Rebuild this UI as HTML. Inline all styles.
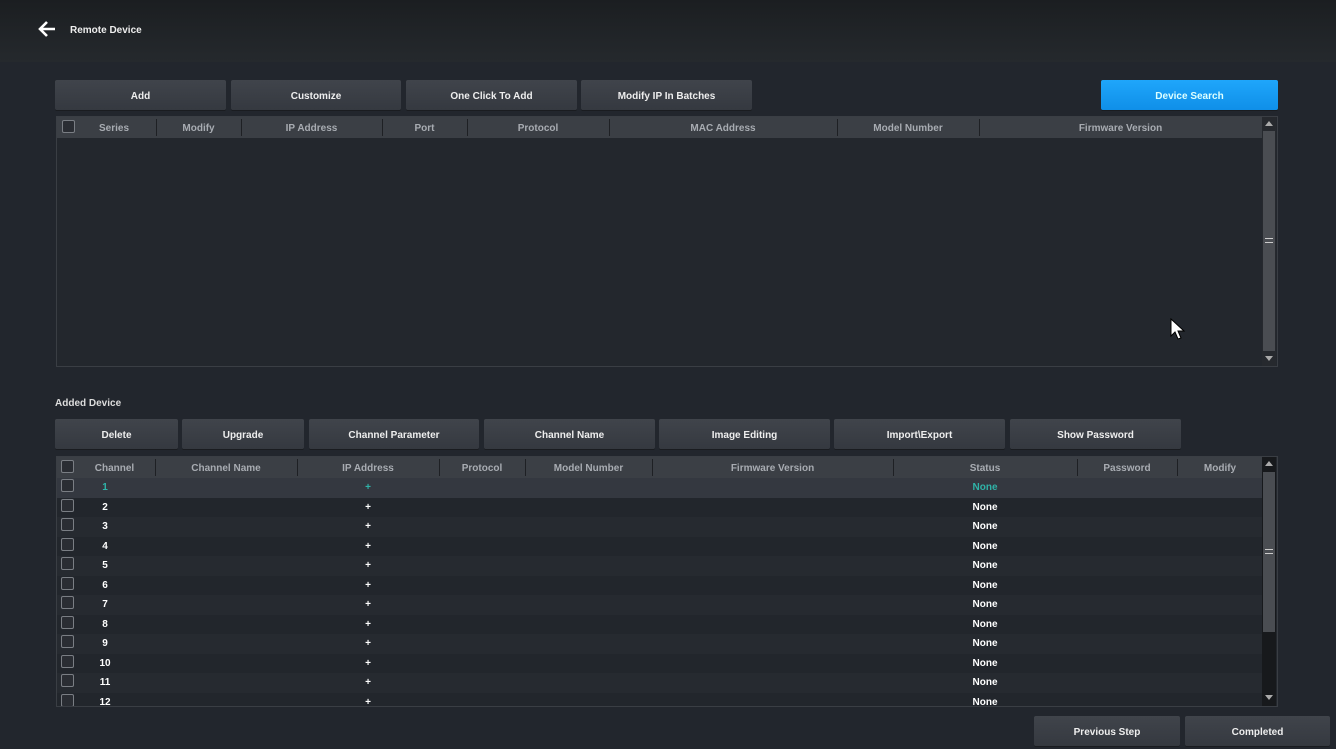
<!DOCTYPE html>
<html><head><style>
*{margin:0;padding:0;box-sizing:border-box}
body{width:1336px;height:749px;background:#22262d;font-family:"Liberation Sans",sans-serif;font-size:10px;font-weight:bold;color:#e8e8e8;position:relative;overflow:hidden}
.hdr{position:absolute;left:0;top:0;width:1336px;height:62px;background:linear-gradient(#1b1e21,#25292d)}
.a{position:absolute}
.btn{position:absolute;height:30px;background:linear-gradient(#40444b,#353940);border-radius:2px;text-align:center;line-height:33px;color:#eee;box-shadow:0 1px 0 #1a1c20}
.tbl{position:absolute;left:56px;width:1222px;background:#23272d;border:1px solid #3a3e44}
.th{position:absolute;top:0;height:21px;background:#3b3f45;color:#a8acb2;font-weight:bold;line-height:24px;text-align:center}
.sep{position:absolute;top:2px;width:1px;height:17px;background:#1e2024}
.cb{position:absolute;width:13px;height:13px;border:1px solid #7a7e84;border-radius:2px;background:#2a2d33}
.sb{position:absolute;right:1px;top:0;width:14px;background:#26292e}
.row{position:absolute;left:0;width:1206px;height:19.5px;line-height:19px}
.c{position:absolute;text-align:center}
</style></head><body>
<div class="hdr"></div>
<svg class="a" style="left:37px;top:20px" width="20" height="18" viewBox="0 0 20 18"><path d="M18 9H3M10 2L3 9l7 7" stroke="#fff" stroke-width="2.6" fill="none"/></svg>
<div class="a" style="left:70px;top:25px;color:#eee">Remote Device</div>

<div class="btn" style="left:55px;top:80px;width:171px">Add</div>
<div class="btn" style="left:231px;top:80px;width:170px">Customize</div>
<div class="btn" style="left:406px;top:80px;width:171px">One Click To Add</div>
<div class="btn" style="left:581px;top:80px;width:171px">Modify IP In Batches</div>
<div class="btn" style="left:1101px;top:80px;width:177px;background:linear-gradient(#1fa6fb,#0f8fe8);color:#dff">Device Search</div>

<div class="tbl" style="top:116px;height:251px">
 <div class="th" style="left:0;width:1206px"></div>
 <div class="cb" style="left:5px;top:3px"></div>
 <div class="th c" style="left:16px;width:82px;background:none">Series</div>
 <div class="th c" style="left:99px;width:85px;background:none">Modify</div>
 <div class="th c" style="left:184px;width:141px;background:none">IP Address</div>
 <div class="th c" style="left:325px;width:85px;background:none">Port</div>
 <div class="th c" style="left:410px;width:142px;background:none">Protocol</div>
 <div class="th c" style="left:552px;width:228px;background:none">MAC Address</div>
 <div class="th c" style="left:780px;width:142px;background:none">Model Number</div>
 <div class="th c" style="left:922px;width:283px;background:none">Firmware Version</div>
 <div class="sep" style="left:99px"></div><div class="sep" style="left:184px"></div><div class="sep" style="left:325px"></div><div class="sep" style="left:410px"></div><div class="sep" style="left:552px"></div><div class="sep" style="left:780px"></div><div class="sep" style="left:922px"></div>
 <div class="sb" style="height:249px">
  <div class="a" style="left:3px;top:4px;border:4px solid transparent;border-bottom:5px solid #aaa;border-top:0"></div>
  <div class="a" style="left:1px;top:14px;width:12px;height:220px;background:#4a4d52"></div>
  <div class="a" style="left:3px;top:121px;width:8px;height:5px;border-top:1px solid #ccc;border-bottom:1px solid #ccc"></div>
  <div class="a" style="left:3px;top:239px;border:4px solid transparent;border-top:5px solid #aaa;border-bottom:0"></div>
 </div>
</div>
<svg class="a" style="left:1170px;top:318px" width="16" height="22" viewBox="0 0 16 22"><path d="M1 1v17l4-4 3 7 3-1-3-7h6z" fill="#fff" stroke="#000" stroke-width="1"/></svg>

<div class="a" style="left:55px;top:398px;color:#ddd">Added Device</div>
<div class="btn" style="left:55px;top:419px;width:123px">Delete</div>
<div class="btn" style="left:182px;top:419px;width:122px">Upgrade</div>
<div class="btn" style="left:309px;top:419px;width:170px">Channel Parameter</div>
<div class="btn" style="left:484px;top:419px;width:171px">Channel Name</div>
<div class="btn" style="left:659px;top:419px;width:171px">Image Editing</div>
<div class="btn" style="left:834px;top:419px;width:171px">Import\Export</div>
<div class="btn" style="left:1010px;top:419px;width:171px">Show Password</div>

<div class="tbl" style="top:456px;height:251px;overflow:hidden">
 <div class="th" style="left:0;width:1206px"></div>
 <div class="cb" style="left:4px;top:3px"></div>
 <div class="th c" style="left:17px;width:81px;background:none">Channel</div>
 <div class="th c" style="left:98px;width:142px;background:none">Channel Name</div>
 <div class="th c" style="left:240px;width:142px;background:none">IP Address</div>
 <div class="th c" style="left:382px;width:86px;background:none">Protocol</div>
 <div class="th c" style="left:468px;width:127px;background:none">Model Number</div>
 <div class="th c" style="left:595px;width:241px;background:none">Firmware Version</div>
 <div class="th c" style="left:836px;width:184px;background:none">Status</div>
 <div class="th c" style="left:1020px;width:100px;background:none">Password</div>
 <div class="th c" style="left:1120px;width:86px;background:none">Modify</div>
 <div class="sep" style="left:98px"></div><div class="sep" style="left:240px"></div><div class="sep" style="left:382px"></div><div class="sep" style="left:468px"></div><div class="sep" style="left:595px"></div><div class="sep" style="left:836px"></div><div class="sep" style="left:1020px"></div><div class="sep" style="left:1120px"></div>
 <div id="rows"></div>
 <div class="sb" style="height:251px;background:#17191c">
  <div class="a" style="left:3px;top:4px;border:4px solid transparent;border-bottom:5px solid #aaa;border-top:0"></div>
  <div class="a" style="left:1px;top:15px;width:12px;height:160px;background:#4a4d52"></div>
  <div class="a" style="left:3px;top:92px;width:8px;height:5px;border-top:1px solid #ccc;border-bottom:1px solid #ccc"></div>
  <div class="a" style="left:3px;top:238px;border:4px solid transparent;border-top:5px solid #aaa;border-bottom:0"></div>
 </div>
</div>

<div class="btn" style="left:1034px;top:716px;width:146px">Previous Step</div>
<div class="btn" style="left:1185px;top:716px;width:145px">Completed</div>
<script>
var h='';
for(var i=1;i<=12;i++){
 var t=21+(i-1)*19.5;
 var bg=i==1?'#343840':(i%2?'#262a30':'#22262c');
 var col=i==1?'#2fb3a8':'#fff';
 h+='<div class="row" style="top:'+t+'px;background:'+bg+'">'+
 '<div class="cb" style="left:4px;top:1px"></div>'+
 '<div class="c" style="left:17px;width:62px;color:'+col+'">'+i+'</div>'+
 '<div class="c" style="left:240px;width:142px;color:'+col+'">+</div>'+
 '<div class="c" style="left:836px;width:184px;color:'+col+'">None</div></div>';
}
document.getElementById('rows').innerHTML=h;
</script>
</body></html>
